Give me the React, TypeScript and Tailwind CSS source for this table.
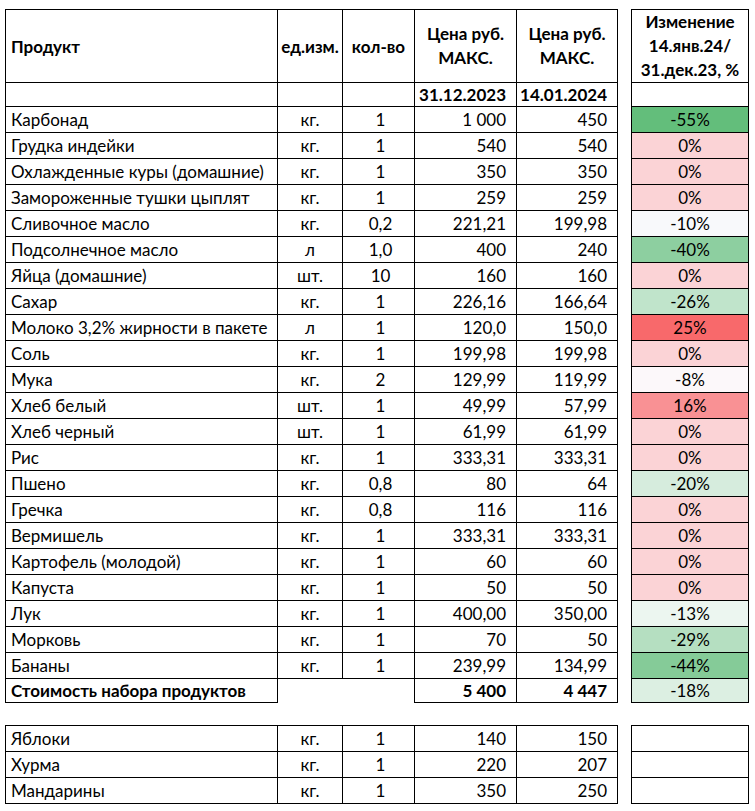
import React from "react";

type Row = {
  name: string;
  unit: string;
  qty: string;
  p1: string;
  p2: string;
  change?: string;
  bg?: string;
};

const rows: Row[] = [
  { name: "Карбонад", unit: "кг.", qty: "1", p1: "1 000", p2: "450", change: "-55%", bg: "bg-[#63be7b]" },
  { name: "Грудка индейки", unit: "кг.", qty: "1", p1: "540", p2: "540", change: "0%", bg: "bg-[#fbd3d6]" },
  { name: "Охлажденные куры (домашние)", unit: "кг.", qty: "1", p1: "350", p2: "350", change: "0%", bg: "bg-[#fbd3d6]" },
  { name: "Замороженные тушки цыплят", unit: "кг.", qty: "1", p1: "259", p2: "259", change: "0%", bg: "bg-[#fbd3d6]" },
  { name: "Сливочное масло", unit: "кг.", qty: "0,2", p1: "221,21", p2: "199,98", change: "-10%", bg: "bg-[#f8f9fb]" },
  { name: "Подсолнечное масло", unit: "л", qty: "1,0", p1: "400", p2: "240", change: "-40%", bg: "bg-[#8dcfa0]" },
  { name: "Яйца (домашние)", unit: "шт.", qty: "10", p1: "160", p2: "160", change: "0%", bg: "bg-[#fbd3d6]" },
  { name: "Сахар", unit: "кг.", qty: "1", p1: "226,16", p2: "166,64", change: "-26%", bg: "bg-[#c0e4cb]" },
  { name: "Молоко 3,2% жирности в пакете", unit: "л", qty: "1", p1: "120,0", p2: "150,0", change: "25%", bg: "bg-[#f8696b]" },
  { name: "Соль", unit: "кг.", qty: "1", p1: "199,98", p2: "199,98", change: "0%", bg: "bg-[#fbd3d6]" },
  { name: "Мука", unit: "кг.", qty: "2", p1: "129,99", p2: "119,99", change: "-8%", bg: "bg-[#fcf8fa]" },
  { name: "Хлеб белый", unit: "шт.", qty: "1", p1: "49,99", p2: "57,99", change: "16%", bg: "bg-[#f99194]" },
  { name: "Хлеб черный", unit: "шт.", qty: "1", p1: "61,99", p2: "61,99", change: "0%", bg: "bg-[#fbd3d6]" },
  { name: "Рис", unit: "кг.", qty: "1", p1: "333,31", p2: "333,31", change: "0%", bg: "bg-[#fbd3d6]" },
  { name: "Пшено", unit: "кг.", qty: "0,8", p1: "80", p2: "64", change: "-20%", bg: "bg-[#d6ecdd]" },
  { name: "Гречка", unit: "кг.", qty: "0,8", p1: "116", p2: "116", change: "0%", bg: "bg-[#fbd3d6]" },
  { name: "Вермишель", unit: "кг.", qty: "1", p1: "333,31", p2: "333,31", change: "0%", bg: "bg-[#fbd3d6]" },
  { name: "Картофель (молодой)", unit: "кг.", qty: "1", p1: "60", p2: "60", change: "0%", bg: "bg-[#fbd3d6]" },
  { name: "Капуста", unit: "кг.", qty: "1", p1: "50", p2: "50", change: "0%", bg: "bg-[#fbd3d6]" },
  { name: "Лук", unit: "кг.", qty: "1", p1: "400,00", p2: "350,00", change: "-13%", bg: "bg-[#ecf6f0]" },
  { name: "Морковь", unit: "кг.", qty: "1", p1: "70", p2: "50", change: "-29%", bg: "bg-[#b5dfc1]" },
  { name: "Бананы", unit: "кг.", qty: "1", p1: "239,99", p2: "134,99", change: "-44%", bg: "bg-[#85cb98]" },
];

const extra: Row[] = [
  { name: "Яблоки", unit: "кг.", qty: "1", p1: "140", p2: "150" },
  { name: "Хурма", unit: "кг.", qty: "1", p1: "220", p2: "207" },
  { name: "Мандарины", unit: "кг.", qty: "1", p1: "350", p2: "250" },
];

const cell = "border border-black";

function Cols() {
  return (
    <colgroup>
      <col className="w-[272px]" />
      <col className="w-[65px]" />
      <col className="w-[72px]" />
      <col className="w-[102px]" />
      <col className="w-[101px]" />
      <col className="w-[14px]" />
      <col className="w-[117px]" />
    </colgroup>
  );
}

function DataRow({ r }: { r: Row }) {
  return (
    <tr className="h-[26px]">
      <td className={`${cell} pl-[5px]`}>{r.name}</td>
      <td className={`${cell} text-center`}>{r.unit}</td>
      <td className={`${cell} text-center pl-[4px]`}>{r.qty}</td>
      <td className={`${cell} text-right pr-[10px]`}>{r.p1}</td>
      <td className={`${cell} text-right pr-[10px]`}>{r.p2}</td>
      <td className="border-0" />
      <td className={`${cell} text-center ${r.bg ?? "bg-white"}`}>{r.change ?? ""}</td>
    </tr>
  );
}

export default function App() {
  return (
    <div
      className="min-h-screen w-[755px] bg-white pt-[9px] pl-[5px] text-[17px] leading-none text-black"
      style={{ fontFamily: "Lato, 'Open Sans', sans-serif" }}
    >
      <table className="table-fixed border-collapse w-[743px]">
        <Cols />
        <tbody>
          <tr className="h-[72px] font-bold">
            <td className={`${cell} pl-[5px]`}>Продукт</td>
            <td className={`${cell} text-center`}>ед.изм.</td>
            <td className={`${cell} text-center`}>кол-во</td>
            <td className={`${cell} text-center leading-[24px]`}>
              Цена руб.
              <br />
              МАКС.
            </td>
            <td className={`${cell} text-center leading-[24px]`}>
              Цена руб.
              <br />
              МАКС.
            </td>
            <td className="border-0" />
            <td className={`${cell} text-center leading-[24px]`}>
              Изменение
              <br />
              14.янв.24/
              <br />
              31.дек.23, %
            </td>
          </tr>
          <tr className="h-[24px] font-bold">
            <td className={cell} />
            <td className={cell} />
            <td className={cell} />
            <td className={`${cell} text-right pr-[10px]`}>31.12.2023</td>
            <td className={`${cell} text-right pr-[10px]`}>14.01.2024</td>
            <td className="border-0" />
            <td className={cell} />
          </tr>
          {rows.map((r) => (
            <DataRow key={r.name} r={r} />
          ))}
          <tr className="h-[24px]">
            <td className={`${cell} pl-[5px] font-bold`}>Стоимость набора продуктов</td>
            <td className="border-0" />
            <td className="border-0" />
            <td className={`${cell} text-right pr-[10px] font-bold`}>5 400</td>
            <td className={`${cell} text-right pr-[10px] font-bold`}>4 447</td>
            <td className="border-0" />
            <td className={`${cell} text-center bg-[#dcefe2]`}>-18%</td>
          </tr>
        </tbody>
      </table>

      <table className="table-fixed border-collapse w-[743px] mt-[22px]">
        <Cols />
        <tbody>
          {extra.map((r) => (
            <DataRow key={r.name} r={r} />
          ))}
        </tbody>
      </table>
    </div>
  );
}
